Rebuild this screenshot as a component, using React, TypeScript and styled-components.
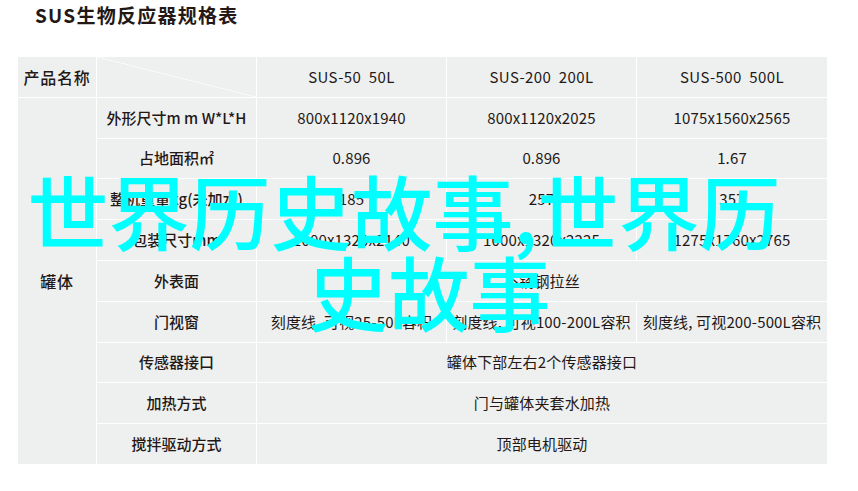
import React from "react";
import styled, { createGlobalStyle } from "styled-components";

const Global = createGlobalStyle`
  html, body { margin: 0; padding: 0; background: #fff; }
  body { font-family: "Noto Sans CJK SC", "Noto Sans", sans-serif; color: #231815; }
`;

const Page = styled.div`
  position: relative;
  width: 858px;
  height: 491px;
  overflow: hidden;
  padding: 0 31px 0 18px;
  box-sizing: border-box;
`;

const Title = styled.h1`
  margin: 0;
  height: 57px;
  padding: 2px 0 0 17px;
  box-sizing: border-box;
  font-size: 19px;
  line-height: 26px;
  font-weight: 700;
  letter-spacing: 1.25px;
`;

const Table = styled.div`
  display: grid;
  grid-template-columns: 78px 159px 189px 189px 190px;
  grid-auto-rows: 39.8px;
  gap: 1px;
  width: 809px;
`;

const Cell = styled.div<{ $span?: number }>`
  display: flex;
  align-items: center;
  justify-content: center;
  background: #eeefef;
  font-size: 15px;
  line-height: 20px;
  white-space: pre;
  letter-spacing: 0.15px;
  ${(p) => (p.$span ? `grid-column: span ${p.$span};` : "")}
`;

const HeaderCell = styled(Cell)`
  letter-spacing: 0.4px;
`;

const Label = styled(Cell)`
  font-weight: 500;
  letter-spacing: 0;
`;

const GroupLabel = styled(Cell)<{ $rows?: number }>`
  font-size: 16px;
  font-weight: 500;
  letter-spacing: 0.8px;
  ${(p) => (p.$rows ? `grid-row: span ${p.$rows};` : "")}
`;

const Diagonal = styled(Cell)`
  background: linear-gradient(
    to bottom left,
    #eeefef calc(50% - 0.6px),
    #fff 50%,
    #eeefef calc(50% + 0.6px)
  );
`;

const Overlay = styled.div`
  position: absolute;
  left: 49px;
  top: 168px;
  width: 760px;
  text-align: center;
  text-indent: -50px;
  color: #00ffff;
  font-size: 81px;
  line-height: 81px;
  font-weight: 500;
`;

type Row = { label: string; values: string[] };

const rows: Row[] = [
  { label: "外形尺寸m m W*L*H", values: ["800x1120x1940", "800x1120x2025", "1075x1560x2565"] },
  { label: "占地面积㎡", values: ["0.896", "0.896", "1.67"] },
  { label: "整机重量kg(未加水)", values: ["185", "257", "357"] },
  { label: "包装尺寸mm", values: ["1000x1320x2140", "1000x1320x2225", "1275x1760x2765"] },
  { label: "外表面", values: ["不锈钢拉丝"] },
  { label: "门视窗", values: ["刻度线, 可视25-50L容积", "刻度线, 可视100-200L容积", "刻度线, 可视200-500L容积"] },
  { label: "传感器接口", values: ["罐体下部左右2个传感器接口"] },
  { label: "加热方式", values: ["门与罐体夹套水加热"] },
  { label: "搅拌驱动方式", values: ["顶部电机驱动"] },
];

export default function App() {
  return (
    <>
      <Global />
      <Page>
        <Title>SUS生物反应器规格表</Title>
        <Table>
          <GroupLabel>产品名称</GroupLabel>
          <Diagonal />
          <HeaderCell>SUS-50  50L</HeaderCell>
          <HeaderCell>SUS-200  200L</HeaderCell>
          <HeaderCell>SUS-500  500L</HeaderCell>
          <GroupLabel $rows={9}>罐体</GroupLabel>
          {rows.map((r) => (
            <React.Fragment key={r.label}>
              <Label>{r.label}</Label>
              {r.values.map((v, i) => (
                <Cell key={i} $span={r.values.length === 1 ? 3 : undefined}>{v}</Cell>
              ))}
            </React.Fragment>
          ))}
        </Table>
        <Overlay>世界历史故事,世界历史故事</Overlay>
      </Page>
    </>
  );
}
